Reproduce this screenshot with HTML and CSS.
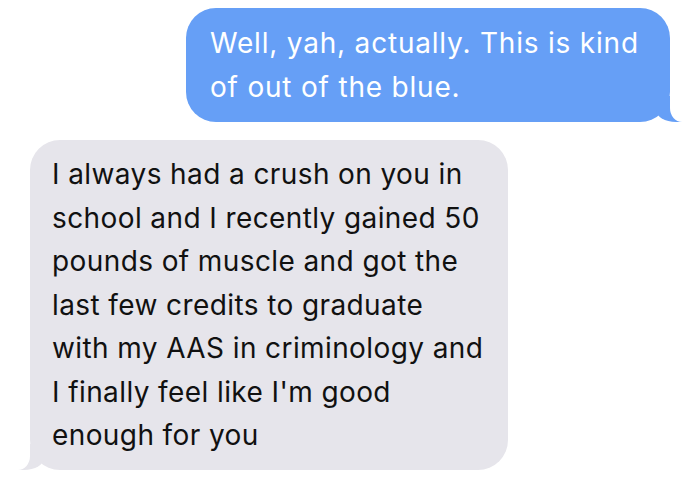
FILE: index.html
```html
<!DOCTYPE html>
<html>
<head>
<meta charset="utf-8">
<link rel="stylesheet" href="styles.css">
</head>
<body>
<div class="thread">
  <div class="bubble sent">Well, yah, actually. This is kind<br>of out of the blue.</div>
  <div class="bubble received">I always had a crush on you in<br>school and I recently gained 50<br>pounds of muscle and got the<br>last few credits to graduate<br>with my AAS in criminology and<br>I finally feel like I'm good<br>enough for you</div>
</div>
</body>
</html>
```
FILE: styles.css
```css
html, body {
  margin: 0;
  padding: 0;
  background: #ffffff;
}
.thread {
  width: 700px;
  height: 487px;
  display: flex;
  flex-direction: column;
  padding-top: 8px;
  box-sizing: border-box;
  gap: 18px;
  font-family: Inter, "Liberation Sans", sans-serif;
  font-size: 28px;
}
.bubble {
  position: relative;
  box-sizing: border-box;
  border-radius: 30px;
  white-space: nowrap;
}
.sent {
  align-self: flex-start;
  margin-left: 186px;
  width: 484px;
  height: 114px;
  padding: 13px 20px 13px 24px;
  line-height: 44px;
  letter-spacing: 0.8px;
  background: #669ff6;
  color: #ffffff;
}
.sent::before {
  content: "";
  position: absolute;
  bottom: 0;
  right: -12px;
  width: 26px;
  height: 26px;
  background: #669ff6;
  border-bottom-left-radius: 20px 12px;
}
.sent::after {
  content: "";
  position: absolute;
  bottom: 0;
  right: -30px;
  width: 30px;
  height: 30px;
  background: #ffffff;
  border-bottom-left-radius: 12px 14px;
}
.received {
  align-self: flex-start;
  margin-left: 30px;
  width: 478px;
  height: 330px;
  padding: 13px 16px 12px 22px;
  line-height: 43.5px;
  letter-spacing: 0.4px;
  background: #e6e5eb;
  color: #111111;
}
.received::before {
  content: "";
  position: absolute;
  bottom: 0;
  left: -12px;
  width: 26px;
  height: 26px;
  background: #e6e5eb;
  border-bottom-right-radius: 20px 12px;
}
.received::after {
  content: "";
  position: absolute;
  bottom: 0;
  left: -30px;
  width: 30px;
  height: 30px;
  background: #ffffff;
  border-bottom-right-radius: 12px 14px;
}
```
